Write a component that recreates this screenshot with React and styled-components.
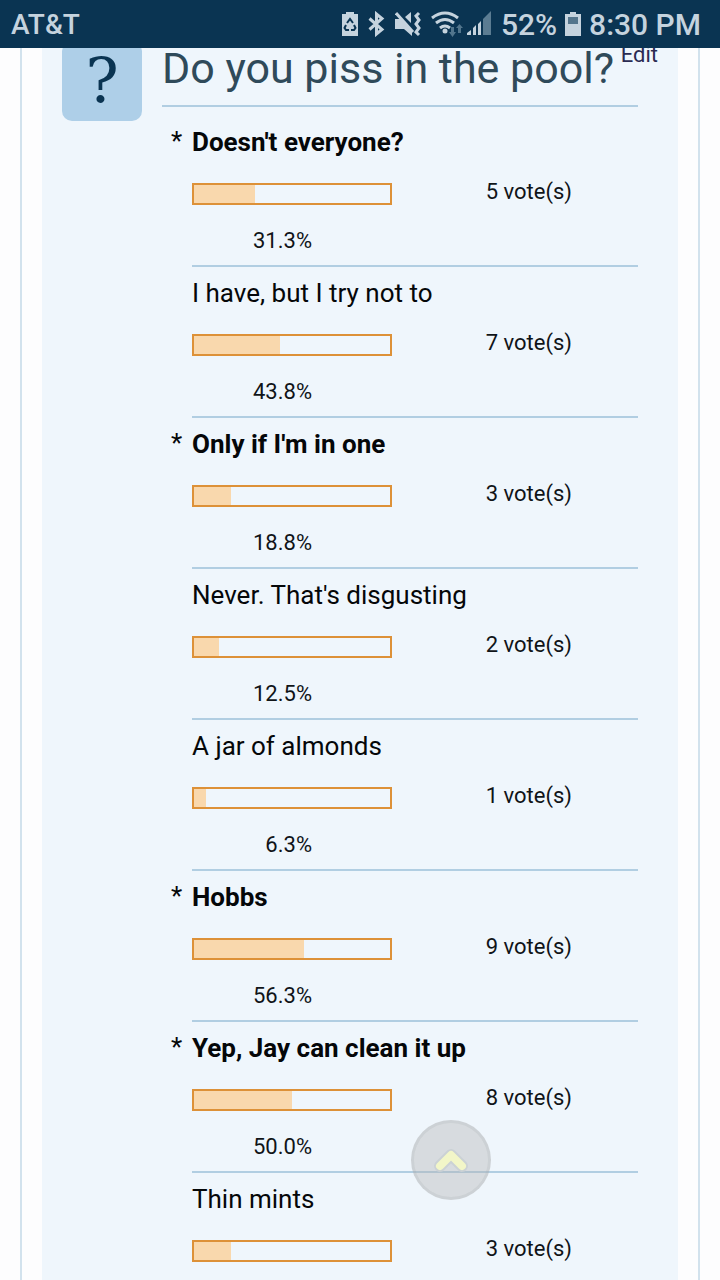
import styled, { createGlobalStyle } from "styled-components"

const colors = {
  navy: "#0a3452",
  status: "#c5d3de",
  line: "#b1cee2",
  box: "#aecfe8",
  panel: "#eff6fc",
  orange: "#dd9138",
  fill: "#f9d8ad",
}

const choices = [
  { label: "Doesn't everyone?", votes: 5, percent: 31.3, mine: true },
  { label: "I have, but I try not to", votes: 7, percent: 43.8 },
  { label: "Only if I'm in one", votes: 3, percent: 18.8, mine: true },
  { label: "Never. That's disgusting", votes: 2, percent: 12.5 },
  { label: "A jar of almonds", votes: 1, percent: 6.3 },
  { label: "Hobbs", votes: 9, percent: 56.3, mine: true },
  { label: "Yep, Jay can clean it up", votes: 8, percent: 50.0, mine: true },
  { label: "Thin mints", votes: 3, percent: 18.8, barOnly: true },
]

function StatusBar() {
  return (
    <Styled.StatusBar>
      <Styled.Carrier>AT&amp;T</Styled.Carrier>
      <Styled.StatusIcons>
        <svg width="16" height="24" viewBox="0 0 16 24" aria-hidden="true">
          <path d="M4 0h8v2h4v22H0V2h4z" fill={colors.status} />
          <g fill="none" stroke={colors.navy} strokeWidth="2">
            <path d="M5 11 8 7l3 4" />
            <path d="M12 13l1.500 3-1.500 2H9" />
            <path d="M4 13 2.500 16l1.500 2h3" />
          </g>
        </svg>
        <svg width="17" height="26" viewBox="0 0 17 26" aria-hidden="true">
          <path d="M1.500 7.500 14 18.500l-5.500 4.500V3L14 7.500 1.500 18.500" fill="none" stroke={colors.status} strokeWidth="3" />
        </svg>
        <svg width="26" height="26" viewBox="0 0 26 26" aria-hidden="true">
          <path d="M0 8h5l12 12v5l-8-7H0zM10 6l6-5v11z" fill={colors.status} />
          <path d="M1 2l17 19" stroke={colors.status} strokeWidth="3" />
          <path d="M24 2l-3 3 3 4-3 4 3 4-3 4 3 3" fill="none" stroke={colors.status} strokeWidth="3" />
        </svg>
        <Styled.Signal>
          <svg width="32" height="26" viewBox="0 0 32 26" aria-hidden="true">
            <g fill="none" stroke={colors.status} strokeWidth="3">
              <path d="M1 7q13-10 26 0" />
              <path d="M5 12q9-7 18 0" />
              <path d="M9 17q5-4 10 0" />
            </g>
            <circle cx="14" cy="20" r="2.500" fill={colors.status} />
            <path d="M20 16v5h-2l3.500 5 3.500-5h-2v-5zM27 22v-5h-2l3.500-4 3.500 4h-2v5z" fill="#52758c" />
          </svg>
          <svg width="24" height="24" viewBox="0 0 24 24" aria-hidden="true">
            <path d="M0 24v-2l4-3v5zM6 24v-7l3-3v10zM11 24V13l3-3v14z" fill={colors.status} />
            <path d="M16 24V8l8-8v24z" fill="#5b7c92" />
          </svg>
        </Styled.Signal>
      </Styled.StatusIcons>
      <Styled.StatusText>52%</Styled.StatusText>
      <svg width="16" height="24" viewBox="0 0 16 24" aria-hidden="true">
        <path d="M5 0h6v2h5v22H0V2h5z" fill={colors.status} />
        <path d="M3 5h10v7H3z" fill="#54758c" />
      </svg>
      <Styled.StatusText>8:30 PM</Styled.StatusText>
    </Styled.StatusBar>
  )
}

function Choice({ label, votes, percent, mine, barOnly }) {
  return (
    <Styled.Choice>
      <Styled.Label $mine={mine}>
        {mine && <Styled.Star>*</Styled.Star>}
        {label}
      </Styled.Label>
      <Styled.Result>
        <Styled.Bar>
          <Styled.Fill style={{ width: `${percent}%` }} />
        </Styled.Bar>
        <Styled.Votes>{votes} vote(s)</Styled.Votes>
      </Styled.Result>
      {!barOnly && <Styled.Percent>{percent.toFixed(1)}%</Styled.Percent>}
    </Styled.Choice>
  )
}

export default function App() {
  return (
    <Styled.Screen>
      <GlobalStyle />
      <StatusBar />
      <Styled.Frame>
        <Styled.Panel>
          <Styled.Badge>?</Styled.Badge>
          <Styled.Poll>
            <Styled.Header>
              <Styled.Title>Do you piss in the pool?</Styled.Title>
              <Styled.Edit href="#edit">Edit</Styled.Edit>
            </Styled.Header>
            <Styled.Choices>
              {choices.map((choice) => (
                <Choice key={choice.label} {...choice} />
              ))}
            </Styled.Choices>
          </Styled.Poll>
        </Styled.Panel>
      </Styled.Frame>
      <Styled.ToTop type="button" aria-label="Back to top">
        <svg width="36" height="26" viewBox="0 0 36 26" aria-hidden="true">
          <path d="M7 19 18 8l11 11" fill="none" stroke="#cbd1d5" strokeWidth="12" strokeLinecap="round" strokeLinejoin="round" />
          <path d="M7 19 18 8l11 11" fill="none" stroke="#f2f6c8" strokeWidth="8" strokeLinecap="round" strokeLinejoin="round" />
        </svg>
      </Styled.ToTop>
    </Styled.Screen>
  )
}

const GlobalStyle = createGlobalStyle`
  * {
    box-sizing: border-box;
  }
  body {
    margin: 0;
    background-color: #fdfdfe;
    font-family: Roboto, "Liberation Sans", sans-serif;
    color: #101418;
  }
`

const Styled = {
  Screen: styled.div`
    height: 100vh;
    overflow: hidden auto;
    scrollbar-width: none;
    padding: 0 20px;
  `,
  StatusBar: styled.header`
    position: fixed;
    z-index: 2;
    top: 0;
    left: 0;
    right: 0;
    display: flex;
    align-items: center;
    gap: 8px;
    height: 48px;
    padding: 0 19px 0 11px;
    background-color: ${colors.navy};
    color: ${colors.status};
  `,
  Carrier: styled.span`
    margin-right: auto;
    font-size: 28px;
    font-weight: 500;
  `,
  StatusIcons: styled.div`
    display: flex;
    align-items: center;
    gap: 10px;
    padding-right: 2px;
  `,
  Signal: styled.div`
    display: flex;
    gap: 4px;
  `,
  StatusText: styled.span`
    font-size: 30px;
    font-weight: 500;
  `,
  Frame: styled.div`
    padding: 0 20px;
    border: solid #d2e2ed;
    border-width: 0 2px;
  `,
  Panel: styled.main`
    display: flex;
    gap: 20px;
    min-height: 100vh;
    padding: 41px 20px 20px;
    background-color: ${colors.panel};
  `,
  Badge: styled.div`
    flex: none;
    width: 80px;
    height: 80px;
    border-radius: 10px;
    background-color: ${colors.box};
    color: ${colors.navy};
    font-family: "DejaVu Serif", serif;
    font-size: 62px;
    line-height: 80px;
    text-align: center;
  `,
  Poll: styled.section`
    flex: 1;
  `,
  Header: styled.div`
    display: flex;
    justify-content: space-between;
  `,
  Title: styled.h1`
    margin: 0;
    font-size: 43px;
    font-weight: 400;
    line-height: 54px;
    color: #2f4a5a;
    white-space: nowrap;
  `,
  Edit: styled.a`
    font-size: 22px;
    line-height: 28px;
    color: #2b2b52;
    text-decoration: none;
  `,
  Choices: styled.ul`
    margin: 10px 20px 0 0;
    padding: 9px 0 0 30px;
    border-top: 2px solid ${colors.line};
    list-style: none;
  `,
  Choice: styled.li`
    padding-top: 8px;
    border-bottom: 2px solid ${colors.line};
  `,
  Label: styled.div`
    display: flex;
    margin-bottom: 19px;
    font-size: 26px;
    font-weight: ${({ $mine }) => ($mine ? 700 : 400)};
    line-height: 36px;
    color: #050709;
  `,
  Star: styled.span`
    width: 21px;
    margin-left: -21px;
    font-weight: 400;
    line-height: 34px;
  `,
  Result: styled.div`
    display: flex;
    align-items: flex-end;
    margin-bottom: 20px;
  `,
  Bar: styled.div`
    width: 200px;
    height: 22px;
    border: 2px solid ${colors.orange};
  `,
  Fill: styled.div`
    height: 100%;
    background-color: ${colors.fill};
  `,
  Votes: styled.div`
    width: 180px;
    font-size: 22px;
    line-height: 26px;
    text-align: right;
  `,
  Percent: styled.div`
    width: 120px;
    padding-bottom: 8px;
    font-size: 22px;
    line-height: 32px;
    text-align: right;
  `,
  ToTop: styled.button`
    position: fixed;
    z-index: 1;
    right: 229px;
    bottom: 80px;
    display: flex;
    align-items: center;
    justify-content: center;
    width: 80px;
    height: 80px;
    padding: 0;
    border: 3px solid rgba(160, 165, 170, 0.2);
    border-radius: 50%;
    background-color: rgba(180, 180, 180, 0.4);
  `,
}
